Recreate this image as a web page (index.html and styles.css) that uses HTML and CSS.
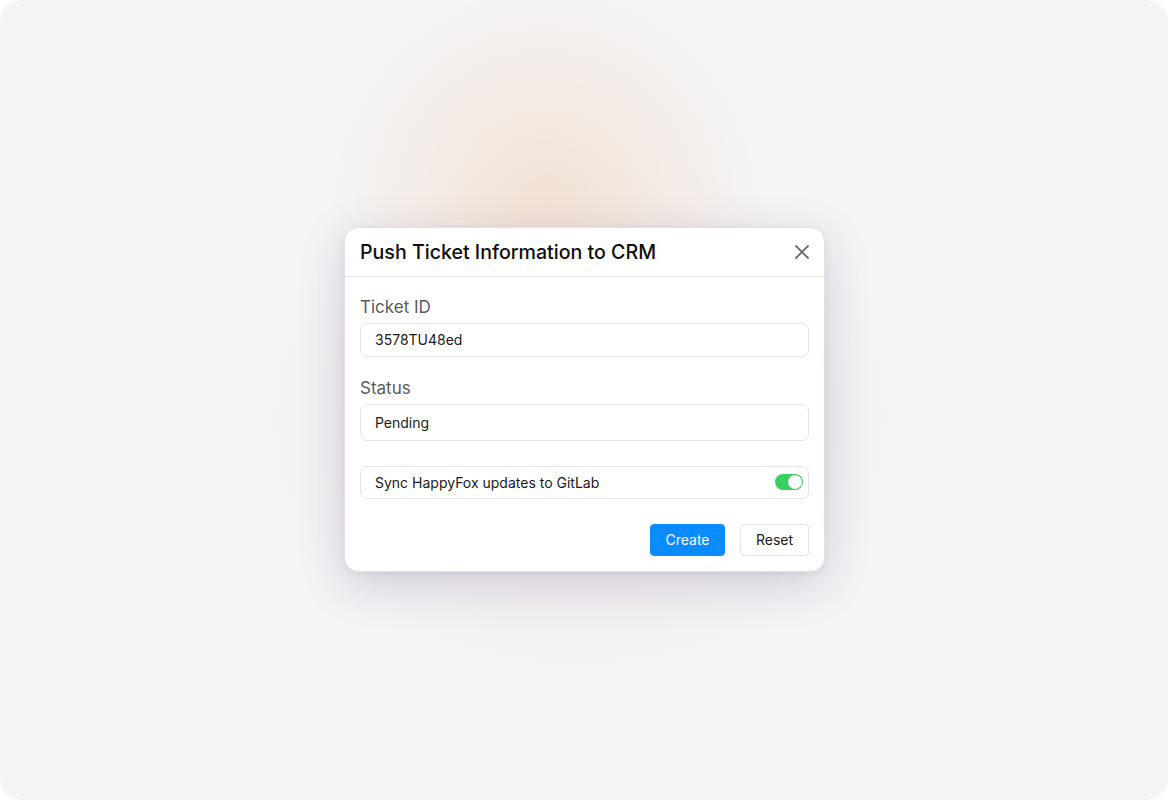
FILE: index.html
```html
<!DOCTYPE html>
<html>
<head>
<meta charset="utf-8">
<link rel="stylesheet" href="styles.css">
</head>
<body>
<div class="stage">
  <div class="glow"></div>
  <div class="modal">
    <div class="modal-header">
      <h1 class="title">Push Ticket Information to CRM</h1>
      <button class="close" aria-label="Close">
        <svg width="16" height="16" viewBox="0 0 16 16"><path d="M2 2 L14 14 M14 2 L2 14" stroke="#6b6b6b" stroke-width="1.8" stroke-linecap="round" fill="none"/></svg>
      </button>
    </div>
    <div class="modal-body">
      <div class="field">
        <label class="label">Ticket ID</label>
        <div class="input input-a">3578TU48ed</div>
      </div>
      <div class="field">
        <label class="label">Status</label>
        <div class="input input-b">Pending</div>
      </div>
      <div class="toggle-row">
        <span>Sync HappyFox updates to GitLab</span>
        <span class="switch"><span class="knob"></span></span>
      </div>
      <div class="actions">
        <button class="btn btn-primary">Create</button>
        <button class="btn btn-secondary">Reset</button>
      </div>
    </div>
  </div>
</div>
</body>
</html>
```

FILE: styles.css
```css
* { box-sizing: border-box; }
html, body { margin: 0; padding: 0; background: #ffffff; }
body { font-family: Inter, "Noto Sans", sans-serif; }

.stage {
  position: relative;
  width: 1168px;
  height: 800px;
  border-radius: 22px;
  overflow: hidden;
  background: #f4f4f6;
  display: flex;
  align-items: center;
  justify-content: center;
}

.glow {
  position: absolute;
  inset: 0;
  background:
    radial-gradient(ellipse 220px 220px at 545px 200px, rgba(242, 210, 180, 0.5), rgba(242, 210, 180, 0) 100%),
    radial-gradient(ellipse 340px 270px at 580px 420px, rgba(228, 212, 216, 0.55), rgba(228, 212, 216, 0) 100%);
  pointer-events: none;
}

.modal {
  position: relative;
  width: 481px;
  background: #ffffff;
  border-radius: 14px;
  border: 1px solid #e2e2e4;
  box-shadow: 0 12px 44px rgba(110, 95, 130, 0.24), 0 2px 8px rgba(0, 0, 0, 0.06);
  margin-top: -1px;
  margin-left: 1px;
}

.modal-header {
  height: 49px;
  padding: 0 14px 0 15px;
  display: flex;
  align-items: center;
  justify-content: space-between;
  border-bottom: 1px solid #e6e6e8;
}

.title {
  margin: 0;
  font-size: 19.6px;
  font-weight: 450;
  color: #0d0d0d;
  letter-spacing: 0;
}

.close {
  border: 0;
  background: none;
  padding: 0;
  width: 16px;
  height: 16px;
  display: flex;
  cursor: pointer;
}

.modal-body {
  padding: 20px 15px 15px 15px;
}

.field { display: flex; flex-direction: column; }
.field + .field { margin-top: 21px; }

.label {
  font-size: 17px;
  line-height: 20px;
  color: #5a5a5e;
  margin-bottom: 6px;
}

.input {
  border: 1px solid #e4e4e7;
  border-radius: 7px;
  padding: 0 14px 1px 14px;
  font-size: 14px;
  color: #1a1a1a;
  display: flex;
  align-items: center;
}
.input-a { height: 34px; }
.input-b { height: 37px; }

.toggle-row {
  margin-top: 25px;
  height: 33px;
  border: 1px solid #e4e4e7;
  border-radius: 7px;
  padding: 0 5px 1px 14px;
  font-size: 14px;
  color: #1a1a1a;
  display: flex;
  align-items: center;
  justify-content: space-between;
}

.switch {
  width: 28px;
  height: 16px;
  border-radius: 8px;
  background: #3ccf62;
  display: flex;
  align-items: center;
  justify-content: flex-end;
  padding: 1px;
}
.knob {
  width: 14px;
  height: 14px;
  border-radius: 50%;
  background: #ffffff;
  box-shadow: 0 0 0 0.5px rgba(0,0,0,0.15);
}

.actions {
  margin-top: 25px;
  display: flex;
  justify-content: flex-end;
  gap: 15px;
}

.btn {
  height: 32px;
  border-radius: 4px;
  font-family: Inter, "Noto Sans", sans-serif;
  font-size: 14px;
  padding: 0 0 2px 0;
  cursor: pointer;
}
.btn-primary {
  width: 75px;
  background: #0a8bff;
  color: #ffffff;
  border: 1px solid #0a8bff;
}
.btn-secondary {
  width: 69px;
  background: #ffffff;
  color: #1a1a1a;
  border: 1px solid #e2e2e4;
}
```
